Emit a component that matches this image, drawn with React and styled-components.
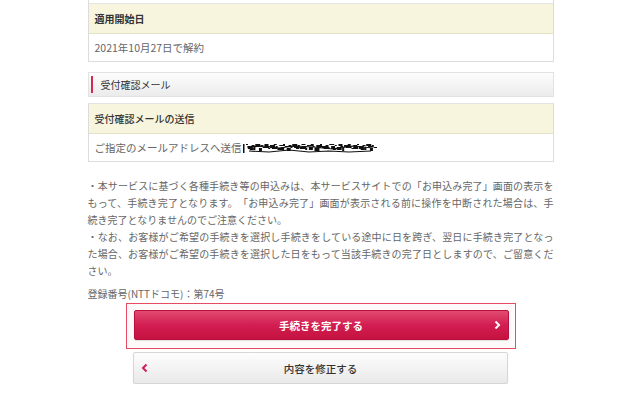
import React from "react";
import styled, { createGlobalStyle } from "styled-components";

const GlobalStyle = createGlobalStyle`
  html, body {
    margin: 0;
    padding: 0;
    background: #ffffff;
  }
  body {
    font-family: "Noto Sans CJK JP", "Noto Sans", sans-serif;
    color: #444;
    text-spacing-trim: space-all;
  }
`;

const Page = styled.div`
  width: 466px;
  margin: 0 auto;
  padding-left: 1px;
`;

const Table = styled.div`
  border: 1px solid #dcdcdc;
  border-top: none;
  margin-top: ${({ $mt }) => $mt || 0}px;
  ${({ $cut }) => ($cut ? "" : "border-top: 1px solid #e4e4e4;")}
`;

const Cut = styled.div`
  height: 3px;
  background: #fff;
  border-bottom: 1px solid #e4e4e4;
`;

const Head = styled.div`
  height: 29px;
  display: flex;
  align-items: center;
  padding-left: 6px;
  background: #f8f5de;
  border-bottom: 1px solid #e6e2c8;
  font-size: 10px;
  font-weight: ${({ $bold }) => ($bold ? 700 : 500)};
  color: #333;
`;

const Value = styled.div`
  height: 27px;
  display: flex;
  align-items: center;
  padding-left: 6px;
  background: #fff;
  font-size: 10.5px;
  color: #666;
`;

const Section = styled.div`
  margin-top: 10px;
  height: 23px;
  display: flex;
  align-items: center;
  border: 1px solid #e2e2e2;
  background: linear-gradient(#fdfdfd, #ebebeb);
  font-size: 10px;
  color: #333;
  position: relative;
  padding-left: 12px;

  &::before {
    content: "";
    position: absolute;
    left: 2px;
    top: 3px;
    bottom: 3px;
    width: 2px;
    background: #d5284f;
  }
`;

const Notes = styled.p`
  margin: 15px 0 0;
  font-size: 10px;
  line-height: 17px;
  color: #666;
  text-align: justify;
  text-justify: inter-character;
`;

const Reg = styled.p`
  margin: 6px 0 0;
  font-size: 10px;
  line-height: 17px;
  color: #666;
`;

const Actions = styled.div`
  display: flex;
  flex-direction: column;
  align-items: center;
  margin-top: 1px;
`;

const Focus = styled.div`
  width: 374px;
  padding: 6px 7px 8px;
  border: 1.5px solid #e54b63;
  background: #fffafa;
`;

const Button = styled.div`
  position: relative;
  height: ${({ $primary }) => ($primary ? 28 : 30)}px;
  width: 373px;
  display: flex;
  align-items: center;
  justify-content: center;
  border-radius: 2px;
  font-size: 10.5px;
  font-weight: ${({ $primary }) => ($primary ? 700 : 500)};
  color: ${({ $primary }) => ($primary ? "#fff" : "#333")};
  background: ${({ $primary }) =>
    $primary
      ? "linear-gradient(#e24b71, #d21e52 50%, #c5123f)"
      : "linear-gradient(#fdfdfd, #e9e9e9)"};
  border: 1px solid ${({ $primary }) => ($primary ? "#b80f3c" : "#d6d6d6")};
  box-shadow: 0 1px 1px rgba(0, 0, 0, 0.12);
  margin-top: ${({ $mt }) => $mt || 0}px;
`;

const Chevron = styled.svg`
  position: absolute;
  top: 50%;
  transform: translateY(-50%);
  ${({ $side }) => ($side === "left" ? "left: 7px;" : "right: 7px;")}
`;

// redacted address: a dense smear of black marks
const marks = Array.from({ length: 70 }, (_, i) => {
  const x = 3 + i * 1.85;
  const y = 3 + ((i * 7) % 5);
  const w = 2 + ((i * 3) % 4);
  const h = 1 + ((i * 5) % 3);
  return { x, y, w, h };
});

const Scribble = () => (
  <svg width="134" height="14" viewBox="0 0 134 14" style={{ marginLeft: 1 }}>
    <rect x="0" y="3" width="1.5" height="9" fill="#111" />
    {marks.map((m, i) => (
      <rect key={i} x={m.x} y={m.y} width={m.w} height={m.h} fill="#111" />
    ))}
    <path
      d="M4 6 L20 5 L36 7 L52 5 L70 6 L90 8 L110 5 L130 7 M6 10 L26 11 L46 9 L66 11 L86 10 L106 11 L128 10"
      stroke="#111"
      strokeWidth="1.2"
      fill="none"
    />
  </svg>
);

export default function App() {
  return (
    <>
      <GlobalStyle />
      <Page>
        <Table $cut>
          <Cut />
          <Head $bold>適用開始日</Head>
          <Value>2021年10月27日で解約</Value>
        </Table>

        <Section>受付確認メール</Section>

        <Table $mt={6}>
          <Head>受付確認メールの送信</Head>
          <Value>
            ご指定のメールアドレスへ送信
            <Scribble />
          </Value>
        </Table>

        <Notes>
          ・本サービスに基づく各種手続き等の申込みは、本サービスサイトでの「お申込み完了」画面の表示をもって、手続き完了となります。「お申込み完了」画面が表示される前に操作を中断された場合は、手続き完了となりませんのでご注意ください。
          <br />
          ・なお、お客様がご希望の手続きを選択し手続きをしている途中に日を跨ぎ、翌日に手続き完了となった場合、お客様がご希望の手続きを選択した日をもって当該手続きの完了日としますので、ご留意ください。
        </Notes>

        <Reg>登録番号(NTTドコモ)：第74号</Reg>

        <Actions>
          <Focus>
            <Button $primary>
              手続きを完了する
              <Chevron $side="right" width="7" height="9" viewBox="0 0 7 9">
                <path d="M1.5 1 L5 4.5 L1.5 8" stroke="#fff" strokeWidth="2" fill="none" />
              </Chevron>
            </Button>
          </Focus>
          <Button $mt={3}>
            <Chevron $side="left" width="7" height="9" viewBox="0 0 7 9">
              <path d="M5.5 1 L2 4.5 L5.5 8" stroke="#d21e52" strokeWidth="2" fill="none" />
            </Chevron>
            内容を修正する
          </Button>
        </Actions>
      </Page>
    </>
  );
}
